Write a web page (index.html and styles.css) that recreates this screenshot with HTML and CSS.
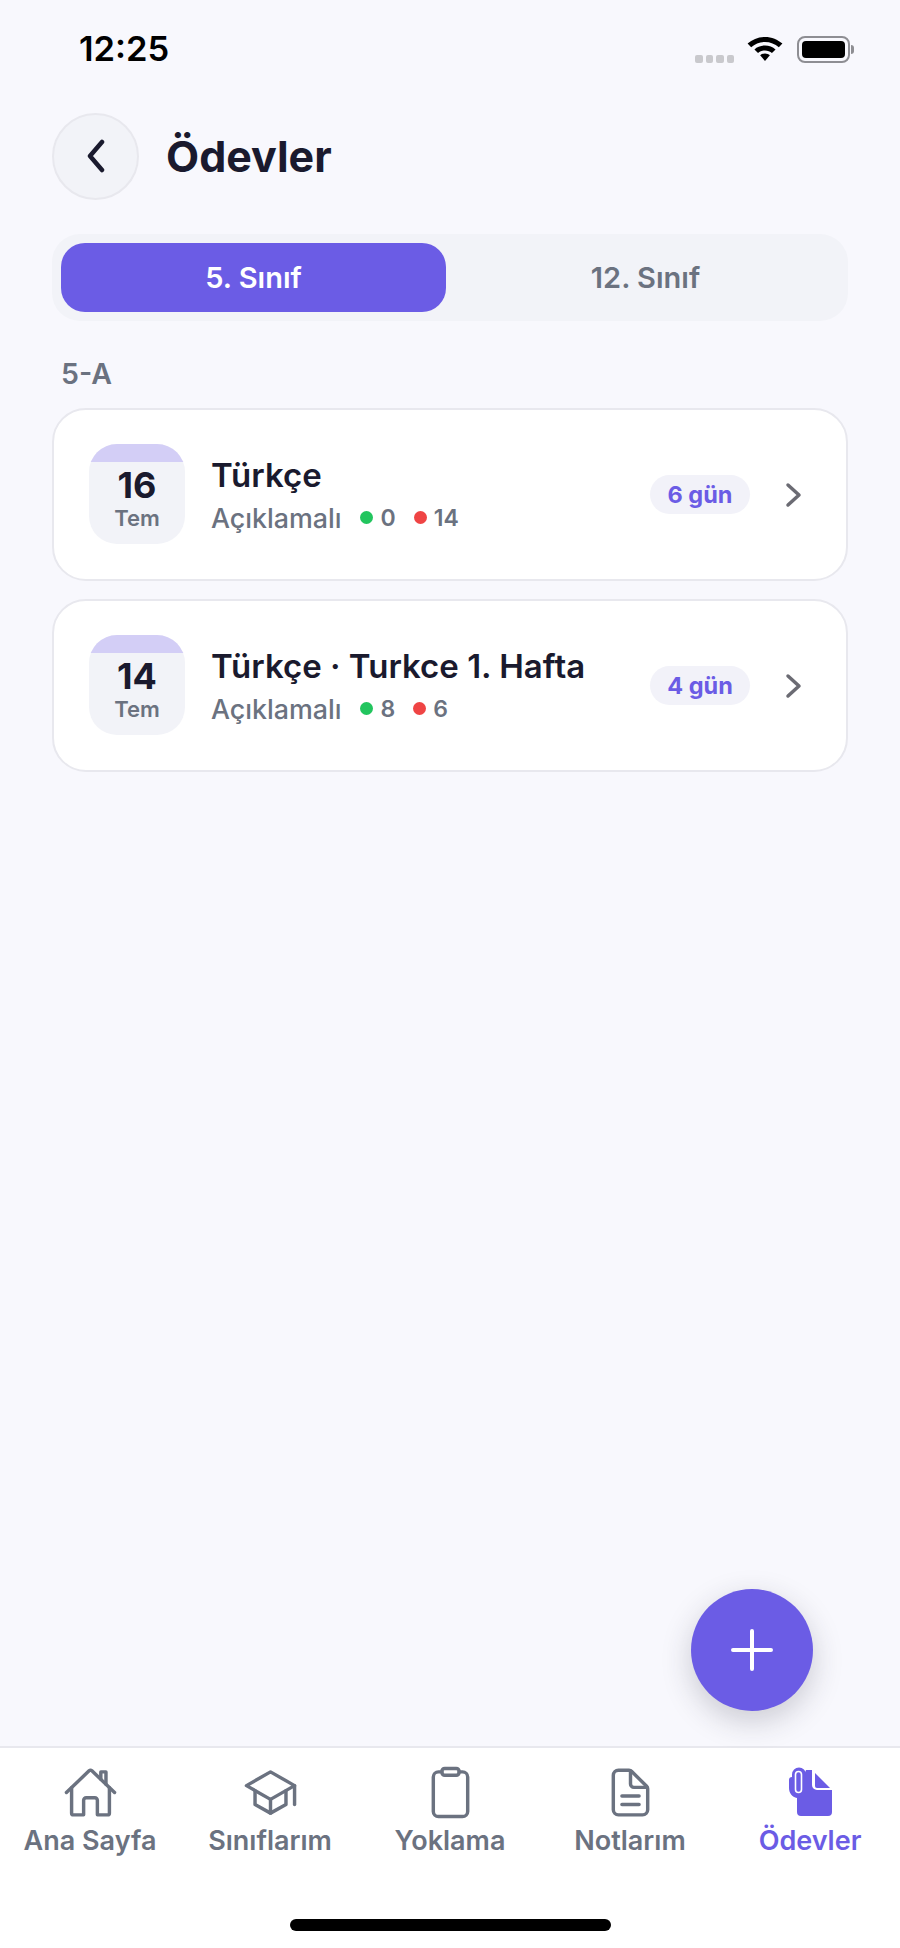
FILE: index.html
```html
<!DOCTYPE html>
<html lang="tr">
<head>
<meta charset="utf-8">
<title>Ödevler</title>
<link rel="stylesheet" href="styles.css">
</head>
<body>
<div class="app">
  <div class="status">
    <span class="time">12:25</span>
    <div class="status-icons">
      <div class="signal"><i></i><i></i><i></i><i></i></div>
      <svg class="wifi" width="38" height="28" viewBox="0 0 36 28" preserveAspectRatio="none"><path d="M18 3C11.5 3 6 5.6 1.5 9.6l3.400 3.600C8.500 10 13 8 18 8s9.500 2 13.100 5.200l3.400-3.600C30 5.600 24.500 3 18 3z"/><path d="M18 11.500c-3.900 0-7.400 1.500-10 3.900l3.400 3.600c1.700-1.600 4-2.500 6.600-2.500s4.900.9 6.600 2.500l3.400-3.600c-2.600-2.400-6.100-3.900-10-3.900z"/><path d="M18 19.500c-1.800 0-3.400.7-4.600 1.800L18 27l4.600-5.700c-1.200-1.100-2.800-1.800-4.600-1.800z"/></svg>
      <div class="battery"><div class="battery-fill"></div></div>
    </div>
  </div>

  <header class="header">
    <button class="back">
      <svg width="30" height="34" viewBox="0 0 30 34"><path d="M21 3L9 17l12 14" class="s-dark"/></svg>
    </button>
    <h1 class="title">Ödevler</h1>
  </header>

  <div class="seg">
    <div class="seg-item active">5. Sınıf</div>
    <div class="seg-item">12. Sınıf</div>
  </div>

  <div class="section-label">5-A</div>

  <div class="cards">
    <div class="card">
      <div class="date"><div class="date-top"></div><div class="date-day">16</div><div class="date-mon">Tem</div></div>
      <div class="info">
        <div class="card-title">Türkçe</div>
        <div class="meta"><span class="desc">Açıklamalı</span><span class="dot green"></span><span class="count">0</span><span class="dot red"></span><span class="count">14</span></div>
      </div>
      <span class="badge">6 gün</span>
      <svg class="chev" width="18" height="26" viewBox="0 0 18 26"><path d="M3 3l11 10L3 23"/></svg>
    </div>
    <div class="card">
      <div class="date"><div class="date-top"></div><div class="date-day">14</div><div class="date-mon">Tem</div></div>
      <div class="info">
        <div class="card-title">Türkçe · Turkce 1. Hafta</div>
        <div class="meta"><span class="desc">Açıklamalı</span><span class="dot green"></span><span class="count">8</span><span class="dot red"></span><span class="count">6</span></div>
      </div>
      <span class="badge">4 gün</span>
      <svg class="chev" width="18" height="26" viewBox="0 0 18 26"><path d="M3 3l11 10L3 23"/></svg>
    </div>
  </div>

  <button class="fab">
    <svg width="44" height="44" viewBox="0 0 44 44"><path d="M22 3v38M3 22h38"/></svg>
  </button>

  <nav class="tabbar">
    <div class="tabs">
      <div class="tab">
        <svg class="tab-icon" viewBox="0 0 512 512"><path d="M80 212v236a16 16 0 0016 16h96V328a24 24 0 0124-24h80a24 24 0 0124 24v136h96a16 16 0 0016-16V212"/><path d="M480 256L266.890 52c-5-5.280-16.690-5.340-21.780 0L32 256"/><path d="M400 179V64h-48v69"/></svg>
        <span>Ana Sayfa</span>
      </div>
      <div class="tab">
        <svg class="tab-icon" viewBox="0 0 512 512"><path d="M32 192L256 64l224 128-224 128L32 192z"/><path d="M112 240v128l144 80 144-80V240"/><path d="M480 368V192"/><path d="M256 320v128"/></svg>
        <span>Sınıflarım</span>
      </div>
      <div class="tab">
        <svg class="tab-icon" viewBox="0 0 512 512"><path d="M336 64h32a48 48 0 0148 48v320a48 48 0 01-48 48H144a48 48 0 01-48-48V112a48 48 0 0148-48h32"/><rect x="176" y="32" width="160" height="64" rx="26" ry="26"/></svg>
        <span>Yoklama</span>
      </div>
      <div class="tab">
        <svg class="tab-icon" viewBox="0 0 512 512"><path d="M416 221.250V416a48 48 0 01-48 48H144a48 48 0 01-48-48V96a48 48 0 0148-48h98.750a32 32 0 0122.620 9.370l141.260 141.260a32 32 0 019.370 22.620z"/><path d="M256 56v120a32 32 0 0032 32h120M176 288h160M176 368h160"/></svg>
        <span>Notlarım</span>
      </div>
      <div class="tab active">
        <svg class="attach" width="60" height="60" viewBox="0 0 60 60"><path class="attach-fill" d="M26 10H32V25a5 5 0 005 5H52V52a4 4 0 01-4 4H21a4 4 0 01-4-4V36z"/><path class="attach-fill" d="M9 20a3 3 0 013-3V14.500a7 7 0 0114 0V38H17C12 37 9 33 9 28z"/><path class="attach-fill" d="M35 13L50 28H37a2 2 0 01-2-2z"/><rect class="attach-ring" x="15.500" y="11.500" width="6" height="21" rx="3"/></svg>
        <span>Ödevler</span>
      </div>
    </div>
    <div class="home-bar"></div>
  </nav>
</div>
</body>
</html>
```
FILE: styles.css
```css
* { box-sizing: border-box; }
html, body { margin: 0; padding: 0; }
body { font-family: Inter, "Noto Sans", sans-serif; background: #f8f8fd; color: #1a1a2e; }

.app { position: relative; width: 900px; height: 1948px; display: flex; flex-direction: column; background: #f8f8fd; }

.status { height: 113px; flex: none; display: flex; justify-content: space-between; align-items: flex-start; padding: 30px 50px 0 79px; }
.time { font-size: 34.500px; line-height: 38px; font-weight: 600; color: #000; }
.status-icons { display: flex; align-items: flex-end; height: 30px; margin-top: 3px; }
.signal { display: flex; gap: 3px; margin-right: 12px; }
.signal i { width: 7.500px; height: 8px; border-radius: 2px; background: #c9c9cd; }
.wifi { fill: #000; margin-right: 13px; margin-bottom: 1px; }
.battery { position: relative; width: 53px; height: 27px; border: 2px solid #8e8e93; border-radius: 8px; padding: 3px; }
.battery::after { content: ""; position: absolute; right: -6px; top: 7px; width: 3px; height: 9px; border-radius: 0 3px 3px 0; background: #8e8e93; }
.battery-fill { width: 100%; height: 100%; border-radius: 4px; background: #000; }

.header { flex: none; display: flex; align-items: center; gap: 27px; padding: 0 52px; height: 86px; }
.back { width: 87px; height: 87px; padding: 0; border-radius: 50%; border: 2px solid #e8e8ee; background: #f2f3f8; display: flex; align-items: center; justify-content: center; }
.s-dark { fill: none; stroke: #1a1a2e; stroke-width: 4.500px; stroke-linecap: round; stroke-linejoin: round; }
.title { margin: 0; font-size: 43px; line-height: 50px; font-weight: 700; color: #1a1a2e; }

.seg { flex: none; display: flex; margin: 35px 52px 0; height: 87px; padding: 9px 9px; border-radius: 28px; background: #f2f3f8; }
.seg-item { flex: 1; display: flex; align-items: center; justify-content: center; font-size: 29px; font-weight: 600; color: #6b7280; border-radius: 24px; padding-left: 6px; }
.seg-item.active { flex: none; width: 385px; padding-left: 0; background: #6b5ce5; color: #fff; }

.section-label { flex: none; margin: 37px 0 0 61px; font-size: 28.500px; line-height: 32px; font-weight: 600; color: #6b7280; }

.cards { flex: none; display: flex; flex-direction: column; gap: 18px; margin: 18px 52px 0; }
.card { display: flex; align-items: center; height: 173px; padding: 0 43px 0 35px; background: #fff; border: 2px solid #e8e8ee; border-radius: 34px; }
.date { position: relative; overflow: hidden; flex: none; width: 96px; height: 100px; border-radius: 28px; background: #f2f3f8; display: flex; flex-direction: column; align-items: center; padding-top: 22px; margin-top: -2px; }
.date-top { position: absolute; top: 0; left: 0; right: 0; height: 18px; background: #d3cef6; }
.date-day { font-size: 36px; line-height: 39px; font-weight: 700; color: #1a1a2e; }
.date-mon { font-size: 22px; line-height: 26px; font-weight: 600; color: #6b7280; }
.info { flex: 1; min-width: 0; margin-left: 26px; }
.card-title { font-size: 33px; line-height: 38px; font-weight: 600; color: #1a1a2e; }
.meta { display: flex; align-items: center; margin-top: 8px; height: 32px; }
.desc { font-size: 26.800px; font-weight: 500; color: #6b7280; }
.dot { width: 13px; height: 13px; border-radius: 50%; margin-right: 7px; }
.dot.green { background: #22c55e; margin-left: 19px; }
.dot.red { background: #ef4444; margin-left: 18px; }
.count { font-size: 23px; font-weight: 600; color: #6b7280; }
.badge { flex: none; display: flex; align-items: center; justify-content: center; width: 100px; height: 39px; border-radius: 20px; background: #f2f2f9; font-size: 23.500px; font-weight: 700; color: #6b5ce5; margin-right: 35px; }
.chev { flex: none; fill: none; stroke: #6b6b73; stroke-width: 3.500px; stroke-linecap: round; stroke-linejoin: round; }

.fab { position: absolute; left: 691px; top: 1589px; width: 122px; height: 122px; padding: 0; border: 0; border-radius: 50%; background: #6b5ce5; box-shadow: 0 10px 30px rgba(40, 40, 60, 0.22); display: flex; align-items: center; justify-content: center; }
.fab svg { fill: none; stroke: #fff; stroke-width: 4px; stroke-linecap: round; }

.tabbar { margin-top: auto; flex: none; height: 202px; border-top: 2px solid #e8e8ee; background: #fff; display: flex; flex-direction: column; }
.tabs { display: grid; grid-template-columns: repeat(5, 180px); padding-top: 17px; }
.tab { display: flex; flex-direction: column; align-items: center; font-size: 27px; line-height: 30px; font-weight: 600; color: #6b7280; }
.tab.active { color: #6b5ce5; }
.tab-icon { width: 55px; height: 55px; fill: none; stroke: #6b7280; stroke-width: 32; stroke-linecap: round; stroke-linejoin: round; margin-bottom: 6px; }
.attach { margin: -5px 0 6px; }
.attach-fill { fill: #6b5ce5; }
.attach-ring { fill: none; stroke: #fff; stroke-width: 1.600px; }
.home-bar { width: 321px; height: 12px; margin: auto auto 17px; border-radius: 6px; background: #000; }
```
